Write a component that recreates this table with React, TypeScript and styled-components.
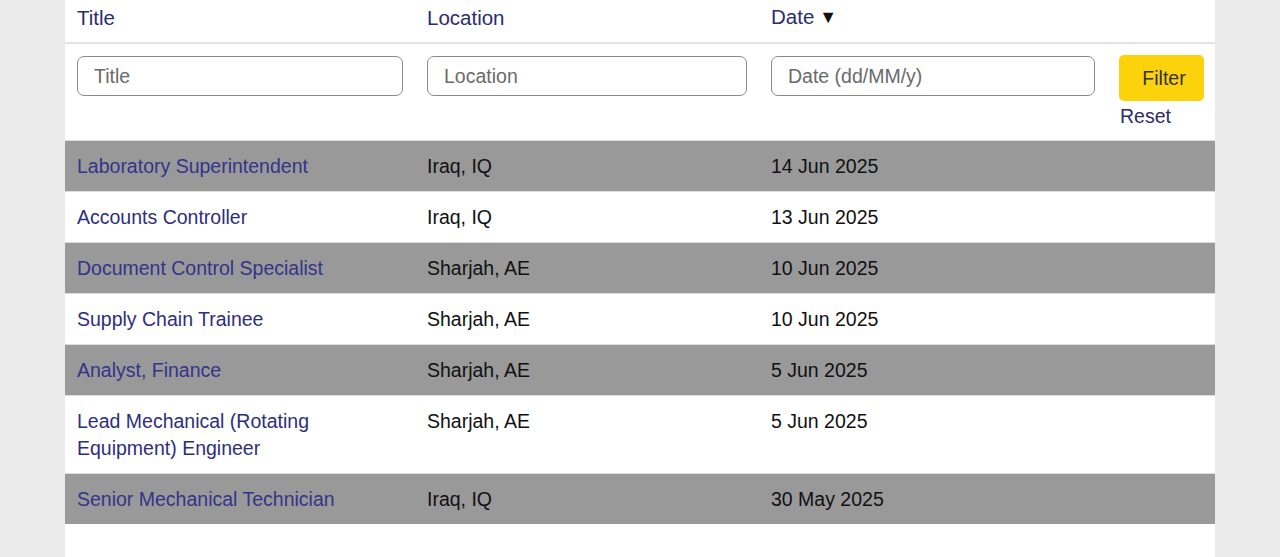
import React from "react";
import styled, { createGlobalStyle } from "styled-components";

const Global = createGlobalStyle`
  html, body { margin: 0; padding: 0; background: #ebebeb; }
  body { font-family: "Liberation Sans", Arial, Helvetica, sans-serif; }
  * { box-sizing: border-box; }
`;

const Page = styled.div`
  display: flex;
  justify-content: center;
  padding-left: 65px;
  padding-right: 65px;
`;

const Panel = styled.div`
  width: 1150px;
  min-height: 557px;
  background: #ffffff;
`;

const Table = styled.table`
  width: 100%;
  border-collapse: collapse;
  table-layout: fixed;
`;

const HeadCell = styled.th<{ $w: number }>`
  width: ${(p) => p.$w}px;
  text-align: left;
  font-weight: normal;
  font-size: 20.5px;
  line-height: 26px;
  color: #2b2b72;
  padding: 4px 12px 11px 12px;
  border-bottom: 2px solid #e4e4e4;
  white-space: nowrap;
`;

const FilterCell = styled.td`
  vertical-align: top;
  padding: 12px 12px 12px 12px;
  height: 96px;
`;

const TextInput = styled.input`
  width: 100%;
  height: 40px;
  border: 1px solid #8a8a8a;
  border-radius: 7px;
  padding: 0 16px;
  font-family: inherit;
  font-size: 19.5px;
  color: #333;
  background: #fff;
  outline: none;
  &::placeholder { color: #6a6a6a; }
`;

const ActionStack = styled.div`
  display: flex;
  flex-direction: column;
  align-items: flex-start;
  margin-top: -1px;
`;

const FilterButton = styled.button`
  width: 85px;
  height: 46px;
  background: #fcd20c;
  border: none;
  border-radius: 5px;
  font-family: inherit;
  font-size: 19.5px;
  color: #333;
  padding: 0 0 0 5px;
  cursor: pointer;
`;

const ResetLink = styled.a`
  margin-top: 3px;
  margin-left: 1px;
  font-size: 19.5px;
  line-height: 24px;
  color: #2b2b6e;
  text-decoration: none;
`;

const Row = styled.tr<{ $shaded: boolean }>`
  background: ${(p) => (p.$shaded ? "#999999" : "#ffffff")};
  border-top: 1px solid #dedede;
`;

const Cell = styled.td<{ $wide?: boolean }>`
  vertical-align: top;
  padding: 11.5px ${(p) => (p.$wide ? "30px" : "12px")} 11.5px 12px;
  font-size: 19.5px;
  line-height: 27px;
  color: #111;
`;

const TitleLink = styled.a<{ $shaded: boolean }>`
  color: ${(p) => (p.$shaded ? "#34348a" : "#2e2e7c")};
  text-decoration: none;
`;

const SortArrow = styled.span`
  color: #111;
  font-size: 18px;
  margin-left: 5px;
  position: relative;
  top: -1px;
`;

const jobs = [
  { title: "Laboratory Superintendent", loc: "Iraq, IQ", date: "14 Jun 2025" },
  { title: "Accounts Controller", loc: "Iraq, IQ", date: "13 Jun 2025" },
  { title: "Document Control Specialist", loc: "Sharjah, AE", date: "10 Jun 2025" },
  { title: "Supply Chain Trainee", loc: "Sharjah, AE", date: "10 Jun 2025" },
  { title: "Analyst, Finance", loc: "Sharjah, AE", date: "5 Jun 2025" },
  { title: "Lead Mechanical (Rotating Equipment) Engineer", loc: "Sharjah, AE", date: "5 Jun 2025" },
  { title: "Senior Mechanical Technician", loc: "Iraq, IQ", date: "30 May 2025" },
];

export default function App() {
  return (
    <>
      <Global />
      <Page>
        <Panel>
          <Table>
            <thead>
              <tr>
                <HeadCell $w={350}>Title</HeadCell>
                <HeadCell $w={344}>Location</HeadCell>
                <HeadCell $w={348}>
                  Date<SortArrow>▼</SortArrow>
                </HeadCell>
                <HeadCell $w={108}></HeadCell>
              </tr>
            </thead>
            <tbody>
              <tr>
                <FilterCell>
                  <TextInput placeholder="Title" />
                </FilterCell>
                <FilterCell>
                  <TextInput placeholder="Location" />
                </FilterCell>
                <FilterCell>
                  <TextInput placeholder="Date (dd/MM/y)" />
                </FilterCell>
                <FilterCell>
                  <ActionStack>
                    <FilterButton>Filter</FilterButton>
                    <ResetLink href="#">Reset</ResetLink>
                  </ActionStack>
                </FilterCell>
              </tr>
              {jobs.map((j, i) => {
                const shaded = i % 2 === 0;
                return (
                  <Row key={j.title} $shaded={shaded}>
                    <Cell $wide>
                      <TitleLink href="#" $shaded={shaded}>
                        {j.title}
                      </TitleLink>
                    </Cell>
                    <Cell>{j.loc}</Cell>
                    <Cell>{j.date}</Cell>
                    <Cell></Cell>
                  </Row>
                );
              })}
            </tbody>
          </Table>
        </Panel>
      </Page>
    </>
  );
}
